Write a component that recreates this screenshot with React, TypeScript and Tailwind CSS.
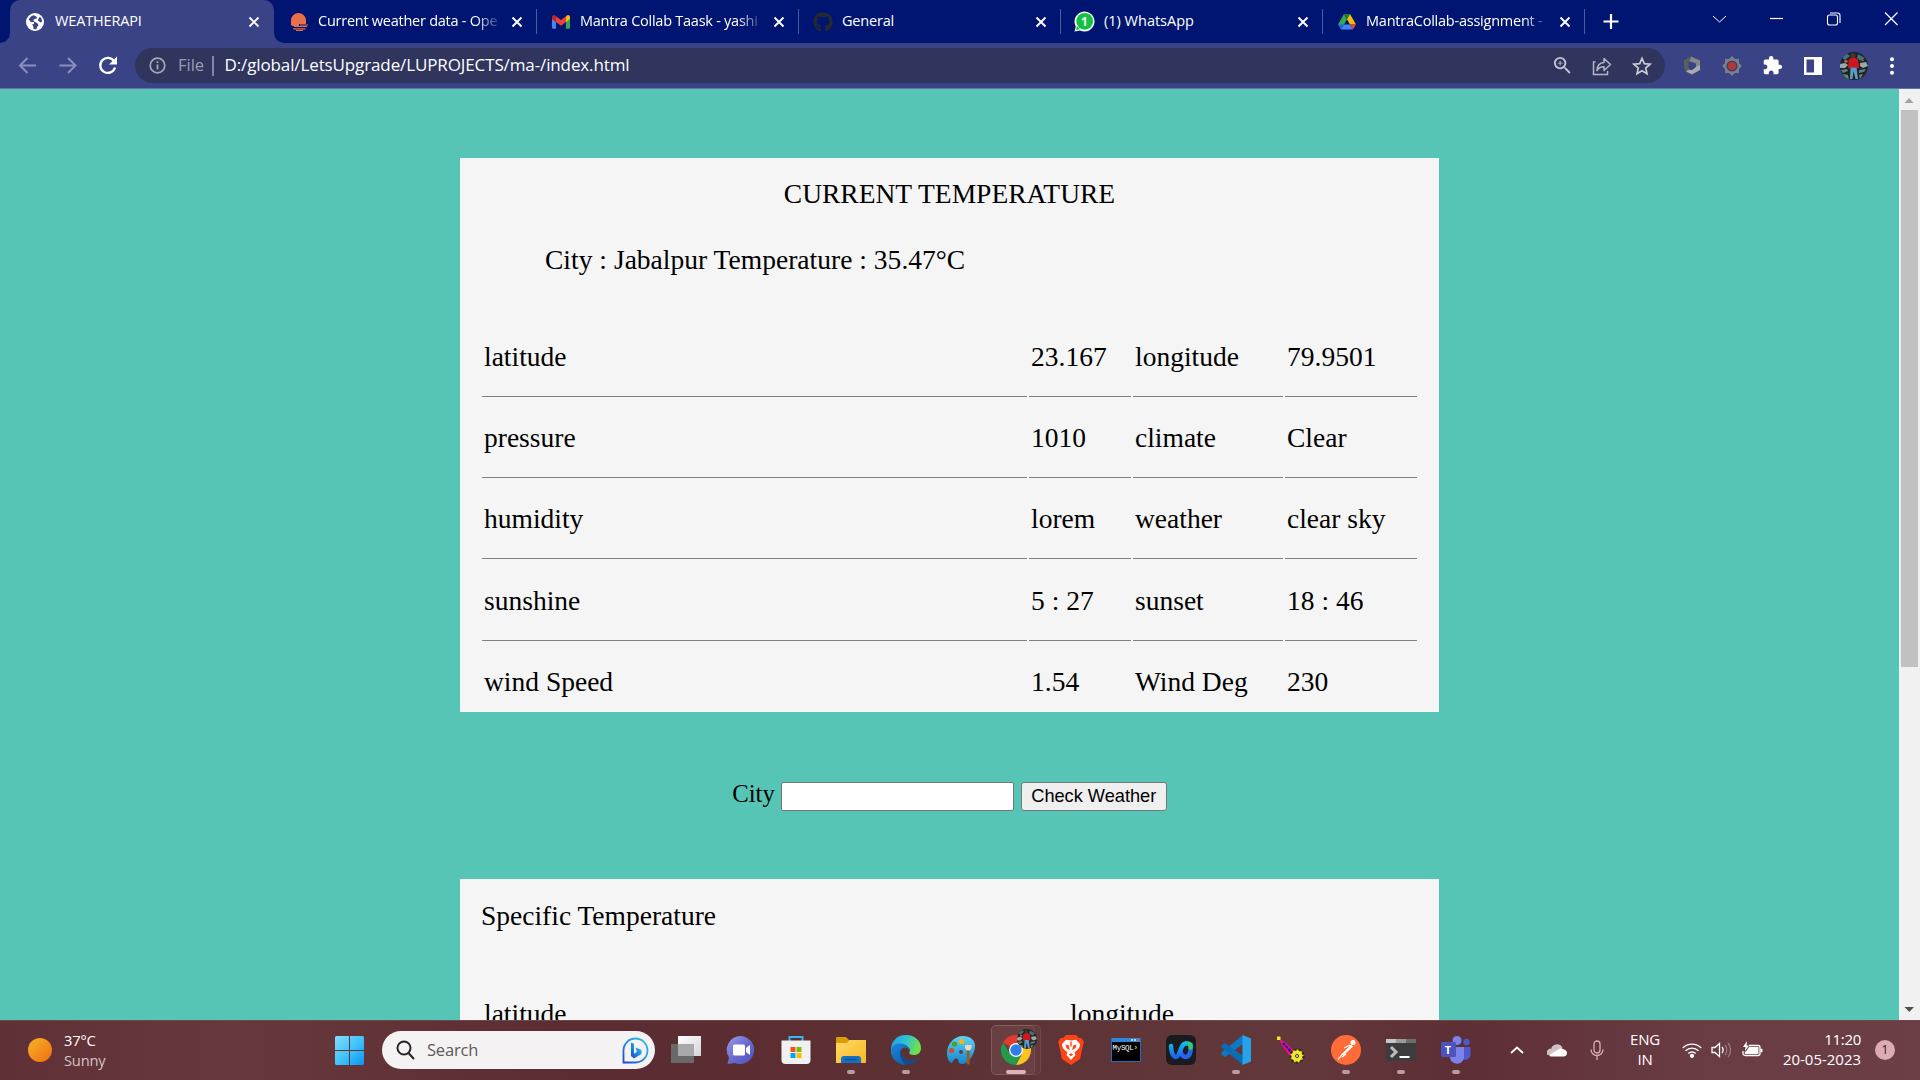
import React from "react";
import { FaGithub } from "react-icons/fa";
import { MdExtension, MdOutlineZoomIn } from "react-icons/md";

type P = { children?: React.ReactNode };

const UI = "font-['Open_Sans','Noto_Sans',sans-serif]";
const SERIF = "font-['Liberation_Serif','Times_New_Roman',serif]";

function CloseX() {
  return (
    <svg width="12" height="12" viewBox="0 0 12 12" className="shrink-0">
      <path d="M1.5 1.500l9 9M10.500 1.500l-9 9" stroke="#fff" strokeWidth="1.900" />
    </svg>
  );
}

function Globe() {
  return (
    <svg width="20" height="20" viewBox="0 0 20 20">
      <circle cx="10" cy="10" r="9" fill="#fff" />
      <path
        d="M9 3.200c-2.600.6-4.300 2-5.300 4.300l2.300 2.500h3v2l-2 .4 1.400 2v2.600c1 .2 2 .2 3-.1.800-1 .4-1.600 1-2.400l1.200-1.300-1.200-2-3-1.400-1.200-1.600 1.200-1.300 2.200-.5.300-1.500z"
        fill="#3a4385"
      />
      <path d="M13.500 6.500l-.5 2.200 3 1.800 1-1c0-2-.8-3.600-2-4.800z" fill="#3a4385" />
    </svg>
  );
}

function OpenWeather() {
  return (
    <svg width="20" height="20" viewBox="0 0 20 20">
      <path d="M2 13V8.500a7.500 7.500 0 0 1 15 0V12H10v2H3.500z" fill="#eb6e4b" />
      <path d="M5 14.500h13M11 13h8M4 16.800h12.500M7 18.500h7" stroke="#eb6e4b" strokeWidth="1.200" />
    </svg>
  );
}

function Gmail() {
  return (
    <svg width="20" height="20" viewBox="0 0 20 20">
      <path d="M1 6v9.500c0 .8.500 1.300 1.300 1.300H5V9z" fill="#4285f4" />
      <path d="M19 6v9.500c0 .8-.5 1.300-1.300 1.300H15V9z" fill="#34a853" />
      <path d="M5 4.500v5.500L1 7V5c0-1.900 2-2.700 3.300-1.500z" fill="#c5221f" />
      <path d="M15 4.500v5.500l4-3V5c0-1.900-2-2.700-3.300-1.500z" fill="#fbbc04" />
      <path d="M5 4.200l5 3.800 5-3.800V10l-5 3.700L5 10z" fill="#ea4335" />
    </svg>
  );
}

function WhatsApp() {
  return (
    <div className="relative h-[21px] w-[21px]">
      <svg width="21" height="21" viewBox="0 0 21 21">
        <path d="M.5 20.500l1.300-5A10 10 0 1 1 6 19.500z" fill="#fff" />
        <circle cx="10.700" cy="10.300" r="8.400" fill="#11c243" />
        <path d="M2 19l1-4 3 3.200z" fill="#11c243" />
      </svg>
      <span className="absolute inset-0 flex items-center justify-center text-[12px] leading-none font-bold text-white">1</span>
    </div>
  );
}

function Drive() {
  return (
    <svg width="20" height="20" viewBox="0 0 20 20">
      <path d="M7 2l3 5.200-5.800 10.300L1 12.500z" fill="#34a853" />
      <path d="M7 2h6l-3 5.200z" fill="#188038" />
      <path d="M13 2l6 10.500h-6L10 7.200z" fill="#fbbc04" />
      <path d="M7 12.500h6l3 5H4z" fill="#4285f4" />
      <path d="M13 12.500h6l-3 5z" fill="#ea4335" />
      <path d="M1 12.500h6l-3 5z" fill="#1967d2" />
    </svg>
  );
}

function Tab({ icon, title, fade, tracking }: { icon: React.ReactNode; title: string; fade?: boolean; tracking: string }) {
  return (
    <div className="flex h-[43px] w-[262px] shrink-0 items-center pl-[13px]">
      <div className="flex h-[21px] w-[21px] shrink-0 items-center justify-center">{icon}</div>
      <div
        className={`ml-[9px] w-[184px] shrink-0 pb-[2px] text-[14.500px] leading-[20px] whitespace-nowrap text-white ${tracking} ${
          fade ? "[mask-image:linear-gradient(to_right,#000_158px,transparent_184px)]" : ""
        }`}
      >
        {title}
      </div>
      <div className="ml-[9px] flex w-[12px]">
        <CloseX />
      </div>
      <div className="ml-auto h-[25px] w-px bg-[#4d5a9c]" />
    </div>
  );
}

function Avatar({ size }: { size: number }) {
  return (
    <svg width={size} height={size} viewBox="0 0 28 28">
      <defs>
        <clipPath id={`av${size}`}>
          <circle cx="14" cy="14" r="14" />
        </clipPath>
      </defs>
      <g clipPath={`url(#av${size})`}>
        <rect width="28" height="28" fill="#1b2528" />
        <path d="M0 4l6-3 4 3-5 4zM18 2l7 4-4 3-4-3z" fill="#4a6f78" />
        <path d="M0 12l5-1 3 2-3 3H0zM20 11l6-1 2 4-5 2-3-2z" fill="#9aa9aa" />
        <path d="M1 18l6-1 1 2-5 2zM19 18l7-1-2 3-5 1z" fill="#5f7d80" />
        <path d="M4 8.500l3-.5 1 2-3 1zM21 7.500l3 .5-1 1.500z" fill="#b96a3d" />
        <path d="M3 22l5 1 1 5H6zM19 23l4-1-3 5z" fill="#6f8f57" />
        <circle cx="13" cy="3.800" r="2.500" fill="#54302a" />
        <path d="M8.800 7.500l2.700-1.500h4l2.500 1.500 1.200 8.500-2.200.5-.5-1H11l-1 1-2-.5z" fill="#cf161d" />
        <path d="M10.500 15.500h6l1.500 11.500h-2.500l-2-8-1 8H10z" fill="#5f9acb" />
      </g>
    </svg>
  );
}

function Slot({ w, children }: P & { w: string }) {
  return <div className={`flex shrink-0 items-center justify-center ${w}`}>{children}</div>;
}

function Browser() {
  return (
    <header className={UI}>
      <div className="flex h-[43px] bg-[#001571]">
        <div className="flex w-[10px] items-end justify-end bg-[#3a4385]">
          <div className="h-[43px] w-[10px] rounded-br-[10px] bg-[#001571]" />
        </div>
        <div className="flex h-[43px] w-[264px] shrink-0 items-center rounded-t-[10px] bg-[#3a4385] pl-[15px]">
          <Globe />
          <div className="ml-[10px] w-[182px] pb-[2px] text-[14.500px] leading-[20px] tracking-[-0.150px] text-white">WEATHERAPI</div>
          <div className="ml-[11px]">
            <CloseX />
          </div>
        </div>
        <div className="flex bg-[#3a4385]">
          <div className="flex rounded-bl-[10px] bg-[#001571] pl-px">
            <Tab icon={<OpenWeather />} title="Current weather data - Ope" fade tracking="tracking-[-0.250px]" />
            <Tab icon={<Gmail />} title="Mantra Collab Taask - yashi" fade tracking="tracking-[-0.250px]" />
            <Tab icon={<FaGithub size={20} color="#24292f" />} title="General" tracking="tracking-[-0.200px]" />
            <Tab icon={<WhatsApp />} title="(1) WhatsApp" tracking="tracking-[0px]" />
            <Tab icon={<Drive />} title="MantraCollab-assignment -" fade tracking="tracking-[-0.230px]" />
            <svg width="335" height="43" viewBox="1 0 335 43" fill="none" stroke="#fff">
              <path d="M19.500 21.500h15M27 14v15" strokeWidth="2.200" />
              <path d="M129 16l6.500 6 6.500-6" strokeWidth="1" />
              <path d="M186 18.500h13" strokeWidth="1.200" />
              <rect x="243.500" y="15" width="10" height="10" rx="2" strokeWidth="1.100" />
              <path d="M246 13h7.500q2.500 0 2.500 2.500V23" strokeWidth="1.100" />
              <path d="M301 12.500l12.500 12.500M313.500 12.500L301 25" strokeWidth="1.200" />
            </svg>
          </div>
        </div>
      </div>
      <div className="flex h-[46px] items-center border-b border-[#6670a8] bg-[#3a4385]">
        <Slot w="w-[135px]">
          <svg width="135" height="44" viewBox="0 0 135 44" fill="none" stroke="#8a90bd" strokeWidth="2">
            <path d="M36 21.500H20M27.500 14L20 21.500l7.500 7.500" />
            <path d="M59.500 21.500h16M68 14l7.500 7.500-7.500 7.500" />
            <path d="M114.200 17.500a7.500 7.500 0 1 0 .8 6" stroke="#fff" strokeWidth="2.300" />
            <path d="M117 12.500v8h-8z" fill="#fff" stroke="none" />
          </svg>
        </Slot>
        <div className="flex h-[35px] w-[1530px] shrink-0 items-center rounded-full bg-[#30355e] pl-[14px]">
          <svg width="17" height="17" viewBox="0 0 17 17" fill="none" stroke="#a6a8b8">
            <circle cx="8.500" cy="8.500" r="7.300" strokeWidth="1.700" />
            <path d="M8.500 7.500v5M8.500 4.200v1.900" strokeWidth="1.800" />
          </svg>
          <span className="ml-[12px] w-[34px] pb-px text-[16.500px] leading-[22px] text-[#9a9db3]">File</span>
          <span className="h-[20px] w-[1.500px] bg-[#8286a3]" />
          <span className="ml-[11px] pb-px text-[17px] leading-[22px] tracking-[-0.120px] text-white">D:/global/LetsUpgrade/LUPROJECTS/ma-/index.html</span>
          <div className="mr-[3px] ml-auto flex">
            <Slot w="w-[40px]">
              <MdOutlineZoomIn size={23} color="#c3c4cd" />
            </Slot>
            <Slot w="w-[40px]">
              <svg width="20" height="20" viewBox="0 0 20 20" fill="none" stroke="#b3b5c2" strokeWidth="1.500">
                <path d="M3.500 6H1.500v12.500h14V15" />
                <path d="M5 14.500c.3-5 3-7.800 7-8V2.500l6.500 6-6.500 6v-3.700c-3.500 0-5.500 1.200-7 3.700z" strokeLinejoin="round" />
              </svg>
            </Slot>
            <Slot w="w-[40px]">
              <svg width="20" height="20" viewBox="0 0 20 20" fill="none" stroke="#c9cad3" strokeWidth="1.700">
                <path d="M10 2.300l2.300 5.400 5.800.5-4.400 3.800 1.300 5.700-5-3-5 3 1.300-5.700L1.900 8.200l5.800-.5z" />
              </svg>
            </Slot>
          </div>
        </div>
        <div className="ml-[7px] flex items-center">
          <Slot w="w-[40px]">
            <svg width="18" height="19" viewBox="0 0 18 19">
              <path d="M8 .5L1 4v8l3 4.500L6.500 15l-1-4.500V6L11 2z" fill="#5b5d60" />
              <path d="M8 .5l9 4V13l-4-1V7.500L6 5l2-3z" fill="#85878a" />
              <path d="M17 9v5l-8 4.500-6-3 3-2 3 .5 4-3z" fill="#a9aaac" />
              <path d="M6 6.500l6.500 2.500v2L9 13.800l-3-.5z" fill="#3a4385" />
            </svg>
          </Slot>
          <Slot w="w-[40px]">
            <svg width="20" height="20" viewBox="0 0 20 20">
              <rect x="3" y="3" width="14" height="14" fill="#7e7f86" />
              <rect x="3" y="3" width="14" height="14" fill="#7e7f86" transform="rotate(45 10 10)" />
              <circle cx="10" cy="10" r="4.800" fill="#b4353a" stroke="#35406f" strokeWidth="1.500" />
            </svg>
          </Slot>
          <Slot w="w-[40px]">
            <MdExtension size={21} color="#fff" />
          </Slot>
          <Slot w="w-[41px]">
            <svg width="18" height="18" viewBox="0 0 18 18">
              <path fillRule="evenodd" d="M0 0h18v18H0zM2.500 2.500v13h7.500v-13z" fill="#fff" />
            </svg>
          </Slot>
          <Slot w="w-[41px]">
            <Avatar size={28} />
          </Slot>
          <Slot w="w-[36px]">
            <svg width="4" height="18" viewBox="0 0 4 18" fill="#fff">
              <circle cx="2" cy="2.300" r="2" />
              <circle cx="2" cy="9" r="2" />
              <circle cx="2" cy="15.700" r="2" />
            </svg>
          </Slot>
        </div>
      </div>
    </header>
  );
}

const rows = [
  ["latitude", "23.167", "longitude", "79.9501"],
  ["pressure", "1010", "climate", "Clear"],
  ["humidity", "lorem", "weather", "clear sky"],
  ["sunshine", "5 : 27", "sunset", "18 : 46"],
  ["wind Speed", "1.54", "Wind Deg", "230"],
];

function Page() {
  return (
    <main className={`flex h-[931px] overflow-hidden bg-[#57c5b6] text-black ${SERIF}`}>
      <div className="flex w-[1899px] flex-col items-center pt-[69px]">
        <section className="h-[554px] w-[979px] shrink-0 bg-[#f5f5f5] px-[22px] pt-[20px] text-[27.500px] leading-[32px]">
          <h1 className="text-center">CURRENT TEMPERATURE</h1>
          <p className="mt-[34px] pl-[63px] tracking-[0.020px]">City : Jabalpur Temperature : 35.47°C</p>
          <div className="mt-[40px] flex flex-col">
            {rows.map((r, i) => (
              <div
                key={r[0]}
                className={`grid w-[935px] grid-cols-[545px_102px_150px_132px] gap-x-[2px] ${i === 3 ? "h-[82px]" : "h-[81px]"}`}
              >
                {r.map((c) => (
                  <div key={c} className={`pl-[2px] whitespace-nowrap ${i === 3 ? "pt-[26px]" : "pt-[25px]"} ${i < 4 ? "border-b border-[#808080]" : ""}`}>
                    {c}
                  </div>
                ))}
              </div>
            ))}
          </div>
        </section>
        <form className="flex h-[167px] w-full shrink-0 items-center justify-center pt-[2px]">
          <label className="mr-[6px] pb-[5px] text-[24.700px] leading-[28px]">City</label>
          <input className="h-[29px] w-[233px] rounded-[2px] border border-[#767676] bg-white" />
          <button
            type="button"
            className="ml-[7px] h-[29px] w-[146px] rounded-[3px] border border-[#767676] bg-[#efefef] pb-[2px] font-['Liberation_Sans',Arial,sans-serif] text-[18.200px] leading-[20px] whitespace-nowrap"
          >
            Check Weather
          </button>
        </form>
        <section className="h-[400px] w-[979px] shrink-0 bg-[#f5f5f5] px-[21px] pt-[21px] text-[27.500px] leading-[32px]">
          <h2>Specific Temperature</h2>
          <div className="mt-[66px] grid grid-cols-[586px_300px] pl-[3px]">
            <div>latitude</div>
            <div>longitude</div>
          </div>
        </section>
      </div>
      <div className="flex w-[21px] flex-col items-center bg-[#f1f1f1]">
        <svg width="21" height="21" viewBox="0 0 21 21">
          <path d="M5.500 14l4.500-5 4.500 5z" fill="#a3a3a3" />
        </svg>
        <div className="h-[557px] w-[17px] bg-[#c1c1c1]" />
        <svg width="21" height="21" viewBox="0 0 21 21" className="mt-auto">
          <path d="M5.500 8h9.500l-4.700 5z" fill="#505050" />
        </svg>
      </div>
    </main>
  );
}

function TaskView() {
  return (
    <svg width="30" height="30" viewBox="0 0 30 30">
      <defs>
        <linearGradient id="tv" x1="0" y1="0" x2="1" y2="1">
          <stop offset="0" stopColor="#fff" />
          <stop offset="1" stopColor="#d5d5d5" />
        </linearGradient>
      </defs>
      <rect y="9" width="23" height="19" fill="#696969" />
      <rect x="7" y="1" width="23" height="20" fill="url(#tv)" />
      <rect x="7" y="9" width="16" height="12" fill="#a9a9a9" />
    </svg>
  );
}

function Chat() {
  return (
    <svg width="30" height="30" viewBox="0 0 30 30">
      <defs>
        <linearGradient id="ch" x1="0" y1="0" x2="1" y2="1">
          <stop offset="0" stopColor="#9a9fe8" />
          <stop offset="0.500" stopColor="#6a6bd0" />
          <stop offset="1" stopColor="#4b53bc" />
        </linearGradient>
      </defs>
      <path d="M15 1a14 14 0 1 1-6 27l-7.500 1L3 22.500A14 14 0 0 1 15 1z" fill="url(#ch)" />
      <rect x="7" y="9.500" width="12" height="11" rx="1.500" fill="#fff" />
      <path d="M20 13l4-3v10l-4-3z" fill="#fff" />
    </svg>
  );
}

function Store() {
  return (
    <svg width="30" height="30" viewBox="0 0 30 30">
      <path d="M8.500 6V2h13v4" fill="none" stroke="#35b7ee" strokeWidth="2" />
      <path d="M.5 5.500h29V25a4 4 0 0 1-4 4h-21a4 4 0 0 1-4-4z" fill="#f1f1f1" />
      <path d="M9.500 12h5v5h-5z" fill="#f25022" />
      <path d="M15.500 12h5v5h-5z" fill="#7fba00" />
      <path d="M9.500 18h5v5h-5z" fill="#00a4ef" />
      <path d="M15.500 18h5v5h-5z" fill="#ffb900" />
    </svg>
  );
}

function Folder() {
  return (
    <svg width="30" height="30" viewBox="0 0 30 30">
      <defs>
        <linearGradient id="fo" x1="0" y1="0" x2="1" y2="1">
          <stop offset="0" stopColor="#ffd968" />
          <stop offset="1" stopColor="#f8b820" />
        </linearGradient>
      </defs>
      <path d="M0 3a1 1 0 0 1 1-1h9l3 3h16a1 1 0 0 1 1 1v6H0z" fill="#dd9c05" />
      <path d="M0 8h11l2.500-3H30v23H0z" fill="url(#fo)" />
      <path d="M5 28v-4a3 3 0 0 1 3-3h14a3 3 0 0 1 3 3v4z" fill="#1271c4" />
      <path d="M9 24.500h12" stroke="#0a4d8d" strokeWidth="1.500" />
    </svg>
  );
}

function Edge() {
  return (
    <svg width="30" height="30" viewBox="0 0 30 30">
      <defs>
        <linearGradient id="e1" x1="0" y1="0" x2="1" y2="0.300">
          <stop offset="0" stopColor="#1f9be0" />
          <stop offset="0.500" stopColor="#2cc0d9" />
          <stop offset="1" stopColor="#6ee04b" />
        </linearGradient>
        <linearGradient id="e2" x1="0" y1="0" x2="0.600" y2="1">
          <stop offset="0" stopColor="#1a86d9" />
          <stop offset="1" stopColor="#0c62b5" />
        </linearGradient>
      </defs>
      <path d="M0 15C0 6 6 0 15 0s15 6 15 13c0 4.500-3 7-7 7-3.500 0-5.500-1.300-4.500-3 1.500-2.500-1-6-5-6C7 11 2 14 0 20z" fill="url(#e1)" />
      <path d="M0 15.500C1 10 5.500 8 10 8.500c5 .3 8.500 3.500 8.500 6.500-2-3-6-3.500-8-1-3 3.500-.5 11 4.500 16C6.500 30 0 23.500 0 15.500z" fill="url(#e2)" />
      <path d="M10.500 14c-1.500 6 4 12 10.500 11 3-.3 5-1.500 7-2.700C25.500 27 20.500 30 15.500 30 11 28 7.500 20 10.500 14z" fill="#174b87" />
    </svg>
  );
}

function Paint() {
  return (
    <svg width="30" height="30" viewBox="0 0 30 30">
      <defs>
        <linearGradient id="pa" x1="0" y1="0" x2="0" y2="1">
          <stop offset="0" stopColor="#5fd3f3" />
          <stop offset="1" stopColor="#1384d0" />
        </linearGradient>
      </defs>
      <path d="M17 1c7 0 12 4 12 9.500 0 8-6 18.500-13 18.500-4 0-3-3-4.500-5S8 24.500 6 28c-3-.5-5-5-5-10C1 9 8 1 17 1z" fill="url(#pa)" />
      <circle cx="5.500" cy="15.500" r="2.600" fill="#d64b26" />
      <circle cx="8.500" cy="9" r="2.600" fill="#4aa32a" />
      <circle cx="15.500" cy="6.500" r="2.600" fill="#f6b60b" />
      <circle cx="15" cy="17" r="2" fill="#6a3a3e" />
      <path d="M19 10h6.500v3l-1.800 2.500h-3L19 13z" fill="#ecd9b9" />
      <rect x="20.800" y="15.500" width="2.800" height="14" rx="1" fill="#9c5b19" />
    </svg>
  );
}

function Chrome() {
  return (
    <svg width="30" height="30" viewBox="0 0 30 30">
      <path d="M15 15L2 7.500A15 15 0 0 1 28 7.500z" fill="#e33b2e" />
      <path d="M15 8H28.300A15 15 0 0 1 15 30L21 18.500z" fill="#fcc31e" />
      <path d="M2 7.500L8.900 18.500 15 22l6.100-3.500L15 30A15 15 0 0 1 2 7.500z" fill="#229b4b" />
      <circle cx="15" cy="15" r="7" fill="#fff" />
      <circle cx="15" cy="15" r="5.700" fill="#2f7de9" />
    </svg>
  );
}

function Brave() {
  return (
    <svg width="26" height="30" viewBox="0 0 26 30">
      <path d="M8 0h10l3 3h2.500L26 7l-1 3-3 14-9 6-9-6L1 10 0 7l2.500-4H5z" fill="#fb4418" />
      <path d="M13 5.500l5-.8 4.200 4.600-1.200 4-4.500 4.200 1 2.500L13 25l-4.500-5 1-2.500L5 13.300l-1.200-4L8 4.700z" fill="#fff" />
      <path d="M7.500 9.500l3.500 1 .8 4.500-3.300-1.800zM18.500 9.500l-3.500 1-.8 4.500 3.300-1.800zM10.800 19.500l2.200-1.300 2.200 1.300-2.200 1.800zM12.300 6.500h1.400v5h-1.400z" fill="#fb4418" />
    </svg>
  );
}

function MySql() {
  return (
    <div className="flex h-[24px] w-[30px] flex-col border border-[#2b6cb5] border-t-0 bg-black">
      <div className="flex h-[4px] items-center justify-end gap-[1px] bg-[#2f86d8] pr-px">
        <i className="h-[2px] w-[2px] bg-white/70" />
        <i className="h-[2px] w-[2px] bg-white/70" />
        <i className="h-[2px] w-[2px] bg-[#e0603a]" />
      </div>
      <span className="mt-[2px] pl-px font-['Liberation_Mono',monospace] text-[7.500px] leading-[8px] tracking-[-0.300px] whitespace-nowrap text-white">MySQL›</span>
    </div>
  );
}

function Webex() {
  return (
    <svg width="30" height="30" viewBox="0 0 30 30" fill="none" strokeLinecap="round">
      <defs>
        <linearGradient id="wx" x1="0" y1="0" x2="0" y2="1">
          <stop offset="0" stopColor="#14b8e8" />
          <stop offset="1" stopColor="#1f5ff0" />
        </linearGradient>
      </defs>
      <rect width="30" height="30" rx="6" fill="#191b1e" />
      <path d="M14.500 16c1 4 2.500 6 5 6 3.500 0 5.500-5 5.500-12" stroke="#2563f5" strokeWidth="4.500" />
      <path d="M20 8.500c3-.5 5 .5 4.500 4" stroke="#2fd06b" strokeWidth="4.500" />
      <path d="M5 11c.3 6 2 11 5 11 4.500 0 4-13.500 10-13.500" stroke="url(#wx)" strokeWidth="4.500" />
    </svg>
  );
}

function VsCode() {
  return (
    <svg width="30" height="30" viewBox="0 0 30 30">
      <path d="M22 0v9L4 22l-3.500-2.500v-2z" fill="#0b7bc6" />
      <path d="M22 30v-9L4 8 .5 10.500v2z" fill="#0a6cb5" />
      <path d="M21.500 0L30 3.500v23L21.500 30z" fill="#27a3ec" />
    </svg>
  );
}

function Wand() {
  return (
    <svg width="30" height="30" viewBox="0 0 30 30">
      <path d="M3 4l6 3 9 9-4 5L7 12z" fill="#fb0a8c" />
      <path d="M7 8l9 10" stroke="#16109a" strokeWidth="2.500" strokeDasharray="3 1" />
      <path d="M1 1.500h3.500V5H1z" fill="#f2e62c" />
      <circle cx="21" cy="21" r="6.500" fill="#f2e62c" stroke="#302b05" strokeWidth="2" strokeDasharray="2.500 2" />
      <circle cx="21" cy="21" r="4.500" fill="#f2e62c" />
      <circle cx="21" cy="21" r="1.500" fill="#fff" stroke="#302b05" />
    </svg>
  );
}

function Postman() {
  return (
    <svg width="30" height="30" viewBox="0 0 30 30">
      <circle cx="15" cy="15" r="15" fill="#ff6c37" />
      <circle cx="22" cy="7.500" r="2.500" fill="#fff" />
      <path d="M20 9.500l2 2-9 8.500-2.500-.5z" fill="#fff" />
      <path d="M12 18.500L7 24.500M19 10l-6 3M15 19l-4 3" stroke="#fff" strokeWidth="1.200" />
    </svg>
  );
}

function Terminal() {
  return (
    <svg width="30" height="30" viewBox="0 0 30 30">
      <rect y="4" width="30" height="22" rx="1.500" fill="#3c3c3c" />
      <path d="M0 4h10v4H0z" fill="#c6c6c6" />
      <path d="M10 4h10v4H10z" fill="#9b9b9b" />
      <path d="M20 4h10v4H20z" fill="#6d6d6d" />
      <path d="M5 12l5 5-5 5" fill="none" stroke="#bdbdbd" strokeWidth="3" />
      <path d="M13.500 22h10" stroke="#fff" strokeWidth="2" />
    </svg>
  );
}

function Teams() {
  return (
    <div className="relative h-[30px] w-[30px]">
      <svg width="30" height="30" viewBox="0 0 30 30">
        <circle cx="16" cy="5.500" r="4.500" fill="#7b83eb" />
        <circle cx="25.500" cy="7" r="3.200" fill="#5059c9" />
        <path d="M20 12h9.500v8a5 5 0 0 1-7 4.500z" fill="#5059c9" />
        <path d="M9 12h14v8a7 7 0 0 1-14 3z" fill="#7b83eb" />
        <rect x="0" y="7" width="15" height="15" rx="1.500" fill="#4b53bc" />
      </svg>
      <span className="absolute top-[7px] left-0 w-[15px] text-center text-[11px] leading-[15px] font-bold text-white">T</span>
    </div>
  );
}

const apps: { icon: React.ReactNode; dot?: "open" | "active" }[] = [
  { icon: <TaskView /> },
  { icon: <Chat /> },
  { icon: <Store /> },
  { icon: <Folder />, dot: "open" },
  { icon: <Edge />, dot: "open" },
  { icon: <Paint /> },
  { icon: <Chrome />, dot: "active" },
  { icon: <Brave /> },
  { icon: <MySql /> },
  { icon: <Webex /> },
  { icon: <VsCode />, dot: "open" },
  { icon: <Wand /> },
  { icon: <Postman />, dot: "open" },
  { icon: <Terminal />, dot: "open" },
  { icon: <Teams />, dot: "open" },
];

function Taskbar() {
  return (
    <footer
      className={`flex h-[60px] items-center border-t border-[#6b4a4c] bg-[linear-gradient(to_right,#5f3035_0%,#67383c_12%,#5b2c31_30%,#5b2c31_38%,#5e3335_52%,#63383b_68%,#5d2e36_76%,#693b43_88%,#6c3f47_100%)] pb-px text-white ${UI}`}
    >
      <div className="flex w-[335px] items-center pl-[28px]">
        <div className="h-[24px] w-[24px] rounded-full bg-[linear-gradient(135deg,#f3b52a,#f26d10)]" />
        <div className="ml-[12px] pb-px text-[14.700px] leading-[20px] tracking-[-0.200px]">
          <div>37°C</div>
          <div className="text-[#d3c3c5]">Sunny</div>
        </div>
      </div>
      <svg width="29" height="29" viewBox="0 0 29 29" className="shrink-0">
        <defs>
          <linearGradient id="win" x1="0" y1="0" x2="1" y2="1">
            <stop offset="0" stopColor="#84dcfb" />
            <stop offset="0.500" stopColor="#42c4fa" />
            <stop offset="1" stopColor="#0a94f5" />
          </linearGradient>
        </defs>
        <path d="M1 0h13v14H0V1zM15 0h13l1 1v13H15zM0 15h14v14H1l-1-1zM15 15h14v13l-1 1H15z" fill="url(#win)" />
      </svg>
      <div className="ml-[18px] flex h-[38px] w-[273px] shrink-0 items-center rounded-full bg-[#f5f2f3] pl-[14px]">
        <svg width="19" height="20" viewBox="0 0 19 20" fill="none" stroke="#262626" strokeWidth="2">
          <circle cx="8" cy="8" r="6.500" />
          <path d="M12.500 13l5 5.500" strokeLinecap="round" />
        </svg>
        <span className="ml-[12px] text-[16.500px] leading-[22px] tracking-[-0.200px] text-[#5e5a5b]">Search</span>
        <svg width="27" height="27" viewBox="0 0 27 27" className="mr-[6px] ml-auto" fill="none">
          <defs>
            <linearGradient id="bi" x1="0" y1="1" x2="1" y2="0">
              <stop offset="0" stopColor="#1b49c9" />
              <stop offset="0.500" stopColor="#1d8fe8" />
              <stop offset="1" stopColor="#2cd0d8" />
            </linearGradient>
          </defs>
          <path d="M1.500 25.500V13.500a12 12 0 1 1 12 12z" stroke="url(#bi)" strokeWidth="1.800" />
          <path d="M9 5.500l3 1.200v10l3-2-1.500-4.200 6 2.500v4L12 21.500 9 19z" fill="url(#bi)" />
        </svg>
      </div>
      <div className="ml-[3px] flex h-[58px]">
        {apps.map((a, i) => (
          <div key={i} className="relative flex w-[55px] items-center justify-center">
            {a.dot === "active" && (
              <>
                <div className="absolute top-[4px] left-[3px] h-[50px] w-[50px] rounded-[5px] border border-white/8 bg-white/3" />
                <div className="absolute top-[4px] left-[3px] h-[50px] w-[44px] rounded-[5px] border border-white/8 bg-white/4" />
              </>
            )}
            <div className="relative">
              {a.icon}
              {a.dot === "active" && (
                <div className="absolute -top-[6px] left-[16px]">
                  <Avatar size={20} />
                </div>
              )}
            </div>
            {a.dot === "open" && <div className="absolute bottom-[5px] h-[4px] w-[8px] rounded-full bg-[#b79da1]" />}
            {a.dot === "active" && <div className="absolute bottom-[5px] h-[4px] w-[20px] rounded-full bg-[#e0b1b9]" />}
          </div>
        ))}
      </div>
      <div className="ml-auto flex items-center">
        <svg width="14" height="8" viewBox="0 0 14 8" fill="none" stroke="#fff" strokeWidth="1.800">
          <path d="M1 7l6-5.500L13 7" />
        </svg>
        <svg width="20" height="14" viewBox="0 0 20 14" className="ml-[23px]">
          <path d="M4 7a6 6 0 0 1 11.500-2l-6 6L0 12A4.500 4.500 0 0 1 4 5.500z" fill="#cfc0c3" />
          <path d="M2 12l11-6.500c3 0 7 1.500 7 4.500 0 2-1.500 3.500-3.500 3.500H3.500z" fill="#fff" />
        </svg>
        <svg width="14" height="20" viewBox="0 0 14 20" className="ml-[23px]" fill="none" stroke="#dcb0b7" strokeWidth="1.300">
          <rect x="4" y="1" width="6" height="12" rx="3" />
          <path d="M1 9.500a6 6 0 0 0 12 0M7 15.500V20" />
        </svg>
        <div className="ml-[20px] w-[42px] pb-[2px] text-center text-[15px] leading-[20px] tracking-[-0.200px]">
          <div>ENG</div>
          <div>IN</div>
        </div>
        <svg width="20" height="16" viewBox="0 0 20 16" className="ml-[16px]" fill="none" stroke="#fff" strokeWidth="1.300">
          <path d="M.8 6a13 13 0 0 1 18.400 0M3.500 8.800a9.200 9.200 0 0 1 13 0M6.300 11.500a5.300 5.300 0 0 1 7.400 0" />
          <circle cx="10" cy="13.800" r="1.500" fill="#fff" />
        </svg>
        <svg width="21" height="18" viewBox="0 0 21 18" className="ml-[9px]" fill="none" stroke="#fff" strokeWidth="1.300">
          <path d="M1 6.500h3l4.500-4v13L4 11.500H1z" />
          <path d="M11 6a5 5 0 0 1 0 6" />
          <path d="M14 4a8 8 0 0 1 0 10M17 2a11 11 0 0 1 0 14" stroke="#9d7a80" />
        </svg>
        <svg width="21" height="18" viewBox="0 0 21 18" className="ml-[10px]" fill="none">
          <path d="M7 4.500h9a2 2 0 0 1 2 2v6a2 2 0 0 1-2 2H3a2 2 0 0 1-2-2V10" stroke="#fff" strokeWidth="1.300" />
          <path d="M7 6h9.500v7H2.800v-2.500H4z" fill="#fff" />
          <path d="M5 0L1 6h2.500L3 10l4-5.500H4.500z" fill="#fff" />
          <path d="M18.500 7.500l2 .5v3l-2 .5z" fill="#fff" />
        </svg>
        <div className="ml-[16px] w-[82px] pb-[2px] text-right text-[15px] leading-[20px] tracking-[-0.020px] whitespace-nowrap">
          <div className="tracking-[-0.300px]">11:20</div>
          <div>20-05-2023</div>
        </div>
        <div className="mr-[25px] ml-[14px] flex h-[20px] w-[20px] items-center justify-center rounded-full bg-[#dcabb4] text-[12px] leading-none text-[#2c171b]">1</div>
      </div>
    </footer>
  );
}

export default function App() {
  return (
    <div className="h-[1080px] w-[1920px] overflow-hidden">
      <Browser />
      <Page />
      <Taskbar />
    </div>
  );
}
